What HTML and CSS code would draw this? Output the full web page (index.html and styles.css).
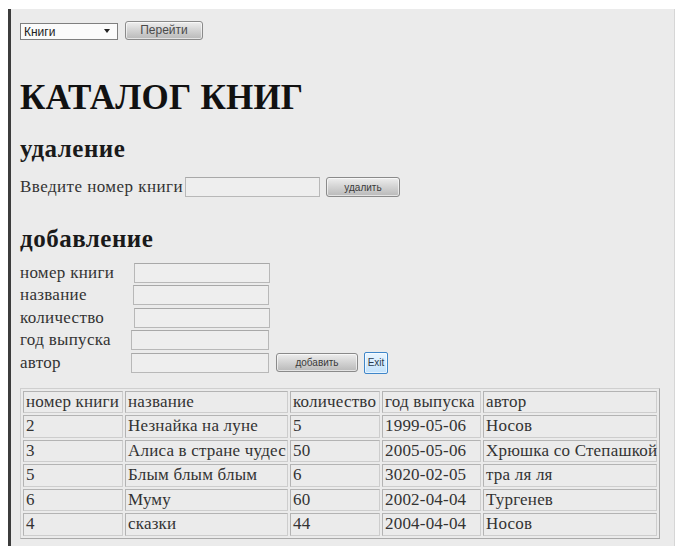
FILE: index.html
```html
<!DOCTYPE html>
<html lang="ru">
<head>
<meta charset="utf-8">
<title>Каталог книг</title>
<link rel="stylesheet" href="styles.css">
</head>
<body>
<div class="frame">
  <form class="nav">
    <span class="select-wrap">
      <select class="nav-select">
        <option>Книги</option>
      </select>
    </span>
    <button type="button" class="btn btn-go">Перейти</button>
  </form>

  <h1 class="title">КАТАЛОГ КНИГ</h1>

  <h2 class="section">удаление</h2>
  <form class="del-row">
    <label class="del-label">Введите номер книги</label>
    <input class="field del-field" type="text">
    <button type="button" class="btn btn-del">удалить</button>
  </form>

  <h2 class="section section-add">добавление</h2>
  <form class="add-form">
    <div class="add-row"><span class="add-label">номер книги</span><input class="field f1" type="text"></div>
    <div class="add-row"><span class="add-label">название</span><input class="field f2" type="text"></div>
    <div class="add-row"><span class="add-label">количество</span><input class="field f1" type="text"></div>
    <div class="add-row"><span class="add-label">год выпуска</span><input class="field f3" type="text"></div>
    <div class="add-row"><span class="add-label">автор</span><input class="field f3" type="text">
      <button type="button" class="btn btn-add">добавить</button>
      <button type="button" class="btn btn-exit">Exit</button>
    </div>
  </form>

  <table class="books">
    <colgroup>
      <col class="c1"><col class="c2"><col class="c3"><col class="c4"><col class="c5">
    </colgroup>
    <tr><td>номер книги</td><td>название</td><td>количество</td><td>год выпуска</td><td>автор</td></tr>
    <tr><td>2</td><td>Незнайка на луне</td><td>5</td><td>1999-05-06</td><td>Носов</td></tr>
    <tr><td>3</td><td>Алиса в стране чудес</td><td>50</td><td>2005-05-06</td><td>Хрюшка со Степашкой</td></tr>
    <tr><td>5</td><td>Блым блым блым</td><td>6</td><td>3020-02-05</td><td>тра ля ля</td></tr>
    <tr><td>6</td><td>Муму</td><td>60</td><td>2002-04-04</td><td>Тургенев</td></tr>
    <tr><td>4</td><td>сказки</td><td>44</td><td>2004-04-04</td><td>Носов</td></tr>
  </table>
</div>
</body>
</html>
```

FILE: styles.css
```css
html, body {
  margin: 0;
  background: #ffffff;
}

body {
  padding: 9px 6px 0 8px;
  font-family: "Liberation Serif", "Times New Roman", serif;
  color: #222;
}

.frame {
  height: 537px;
  box-sizing: border-box;
  background: #ebebeb;
  border-left: 3px solid #3c3c3c;
  border-right: 1px solid #d6d6d6;
  padding: 11px 0 0 9px;
}

/* top navigation: page picker + go button */
.nav {
  display: flex;
  align-items: center;
  gap: 7px;
  height: 20px;
  margin: 0;
}

.select-wrap {
  position: relative;
  display: block;
  width: 98px;
  height: 17px;
}

.select-wrap::after {
  content: "";
  position: absolute;
  right: 8px;
  top: 7px;
  border-left: 3px solid transparent;
  border-right: 3px solid transparent;
  border-top: 4px solid #222;
  pointer-events: none;
}

.nav-select {
  -webkit-appearance: none;
  appearance: none;
  width: 98px;
  height: 17px;
  box-sizing: border-box;
  font: 12px "Liberation Sans", Arial, sans-serif;
  color: #222;
  background: #fbfbfb;
  border: 1px solid #7f7f7f;
  border-radius: 0;
  padding: 0 0 0 3px;
  margin: 0;
}

.btn {
  font: 11px "Liberation Sans", Arial, sans-serif;
  color: #3a3a3a;
  border: 1px solid #8a8a8a;
  border-radius: 3px;
  background: linear-gradient(#eeeeee, #d5d5d5 45%, #b9b9b9);
  box-shadow: inset 0 0 0 1px rgba(255, 255, 255, 0.6);
  padding: 0;
  margin: 0;
  height: 19px;
}

.btn-go {
  width: 78px;
  font-size: 12px;
  color: #4a4a4a;
}

.title {
  font-size: 35px;
  font-weight: bold;
  margin: 38px 0 0;
  line-height: 40px;
  color: #111;
  letter-spacing: 0.2px;
}

.section {
  font-size: 25px;
  font-weight: bold;
  margin: 16px 0 0;
  line-height: 30px;
  color: #1a1a1a;
  letter-spacing: 0.5px;
}

.section-add {
  margin-top: 27px;
}

.del-row {
  display: flex;
  align-items: center;
  margin: 13px 0 0;
  height: 20px;
}

.del-label {
  font-size: 17px;
  letter-spacing: 0.45px;
  margin-right: 2px;
  color: #333;
}

.field {
  height: 20px;
  box-sizing: border-box;
  border: 1px solid #b8b8b8;
  border-top-color: #a8a8a8;
  background: #eeeeee;
  margin: 0;
  padding: 0;
}

.del-field {
  width: 135px;
  margin-right: 6px;
}

.btn-del {
  width: 74px;
  height: 20px;
  font-size: 10px;
}

.add-form {
  margin-top: 9px;
  display: flex;
  flex-direction: column;
  gap: 2.4px;
}

.add-row {
  display: flex;
  align-items: center;
  height: 20px;
}

.add-label {
  font-size: 17px;
  letter-spacing: 0.3px;
  width: 114px;
  color: #333;
}

.f1 { width: 136px; }
.f2 { width: 136px; margin-left: -1px; }
.f3 { width: 138px; margin-left: -3px; }

.btn-add {
  width: 82px;
  height: 19px;
  margin-left: 7px;
  font-size: 10px;
}

.btn-exit {
  width: 24px;
  height: 22px;
  margin-left: 6px;
  border-color: #3f86c9;
  border-radius: 2px;
  background: linear-gradient(#e9f5ff, #c3e2fb);
  color: #2a3b4d;
  font-size: 10px;
}

/* book list */
.books {
  margin-top: 15px;
  width: 640px;
  table-layout: fixed;
  border: 1px solid #cfcfcf;
  border-right-color: #a9a9a9;
  border-bottom-color: #a9a9a9;
  border-spacing: 2px;
  font-size: 17px;
  letter-spacing: 0.2px;
  color: #333;
}

.books td {
  border: 1px solid #cdcdcd;
  border-top-color: #b3b3b3;
  border-left-color: #b3b3b3;
  padding: 0 0 0 2px;
  height: 20.5px;
  white-space: nowrap;
  overflow: visible;
}

.c1 { width: 100px; }
.c2 { width: 163px; }
.c3 { width: 90px; }
.c4 { width: 99px; }
.c5 { width: 174px; }
```
